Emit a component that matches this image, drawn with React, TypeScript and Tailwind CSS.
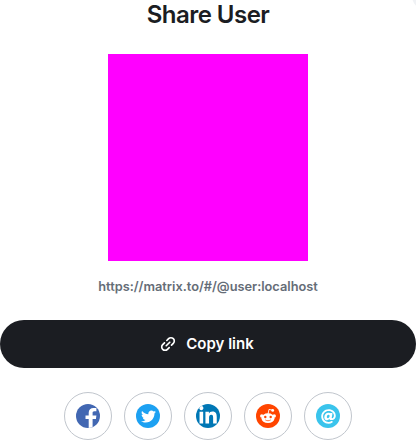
import type { ReactNode } from "react";
import { FaTwitter, FaLinkedinIn, FaAt } from "react-icons/fa";

function LinkIcon() {
  return (
    <svg className="size-5" viewBox="0 0 24 24" fill="currentColor">
      <path d="M12 19.071c-.978.978-2.157 1.467-3.536 1.467-1.378 0-2.557-.489-3.535-1.467-.978-.978-1.467-2.157-1.467-3.535 0-1.38.489-2.558 1.467-3.536L7.05 9.879c.2-.2.436-.3.707-.3.271 0 .507.1.707.3.2.2.301.436.301.707 0 .27-.1.506-.3.707l-2.122 2.121a2.893 2.893 0 0 0-.884 2.122c0 .824.295 1.532.884 2.12.59.59 1.296.885 2.121.885s1.533-.295 2.122-.884l2.121-2.121c.2-.2.436-.301.707-.301.271 0 .507.1.707.3.2.2.3.437.3.708 0 .27-.1.506-.3.707L12 19.07Zm-1.414-4.243c-.2.2-.436.3-.707.3a.967.967 0 0 1-.707-.3.969.969 0 0 1-.301-.707c0-.27.1-.507.3-.707l4.243-4.242c.2-.2.436-.301.707-.301.271 0 .507.1.707.3.2.2.3.437.3.707 0 .271-.1.507-.3.707l-4.242 4.243Zm6.364-.707c-.2.2-.436.3-.707.3a.968.968 0 0 1-.707-.3.969.969 0 0 1-.301-.707c0-.27.1-.507.3-.707l2.122-2.121c.59-.59.884-1.297.884-2.122s-.295-1.532-.884-2.12a2.893 2.893 0 0 0-2.121-.885c-.825 0-1.532.295-2.122.884l-2.121 2.121c-.2.2-.436.301-.707.301a.968.968 0 0 1-.707-.3.97.97 0 0 1-.3-.708c0-.27.1-.506.3-.707L12 4.93c.978-.978 2.157-1.467 3.536-1.467 1.378 0 2.557.489 3.535 1.467.978.978 1.467 2.157 1.467 3.535 0 1.38-.489 2.558-1.467 3.536l-2.121 2.121Z" />
    </svg>
  );
}

function FacebookMark() {
  return (
    <svg className="size-6" viewBox="0 0 24 24" fill="currentColor">
      <path d="M16.6 24v-8.9h3.3l.5-3.7h-3.8V9.1c0-1.1.3-1.8 1.8-1.8h2V4c-.4 0-1.5-.1-2.9-.1-2.9 0-4.8 1.7-4.8 4.9v2.6H9.5v3.7h3.2V24h3.9z" />
    </svg>
  );
}

function RedditFace() {
  return (
    <svg className="size-6" viewBox="0 0 24 24">
      <path d="M12 10.2 13 5.4l3.4.8" fill="none" stroke="#fff" strokeWidth=".9" strokeLinejoin="round" />
      <circle cx="16.7" cy="6.4" r="1.4" fill="#fff" />
      <circle cx="5.8" cy="12" r="1.75" fill="#fff" />
      <circle cx="18.2" cy="12" r="1.75" fill="#fff" />
      <ellipse cx="12" cy="14.2" rx="6.5" ry="4.9" fill="#fff" />
      <circle cx="9.3" cy="13" r="1.2" fill="#ff4500" />
      <circle cx="14.7" cy="13" r="1.2" fill="#ff4500" />
      <path d="M9.6 16.1c1.3.9 3.5.9 4.8 0" fill="none" stroke="#ff4500" strokeWidth=".7" strokeLinecap="round" />
    </svg>
  );
}

function Social({ color, label, children }: { color: string; label: string; children: ReactNode }) {
  return (
    <a aria-label={label} className="flex size-12 items-center justify-center rounded-full border border-[#c1c6cd]">
      <span className={`flex size-6 items-center justify-center overflow-hidden rounded-full text-white ${color}`}>
        {children}
      </span>
    </a>
  );
}

export default function App() {
  return (
    <main className="relative flex h-[440px] w-[416px] flex-col items-center overflow-hidden bg-white font-['Inter',sans-serif]">
      <span className="absolute -top-[18px] left-[412px] size-7 rounded-full bg-[#f0f2f5]" />
      <h1 className="h-[54px] text-2xl leading-[29px] font-semibold tracking-[-0.528px] text-[#1b1d22]">Share User</h1>
      <div className="h-[207px] w-[200px] bg-[#ff00ff]" />
      <p className="mt-4 h-[43px] text-[12.8px] leading-[20px] font-semibold text-[#656d77]">
        https://matrix.to/#/@user:localhost
      </p>
      <button className="flex h-12 w-full items-center justify-center gap-2 rounded-full bg-[#1b1d22] pr-1 text-[15px] font-semibold text-white">
        <LinkIcon />
        Copy link
      </button>
      <div className="mt-6 flex gap-3">
        <Social label="Facebook" color="bg-[#4267b2]">
          <FacebookMark />
        </Social>
        <Social label="Twitter" color="bg-[#1da1f2]">
          <FaTwitter className="size-[15px]" />
        </Social>
        <Social label="LinkedIn" color="bg-[#0077b5]">
          <FaLinkedinIn className="size-[20px] shrink-0" />
        </Social>
        <Social label="Reddit" color="bg-[#ff4500]">
          <RedditFace />
        </Social>
        <Social label="Email" color="bg-[#3ac4ec]">
          <FaAt className="size-[15px]" />
        </Social>
      </div>
    </main>
  );
}
